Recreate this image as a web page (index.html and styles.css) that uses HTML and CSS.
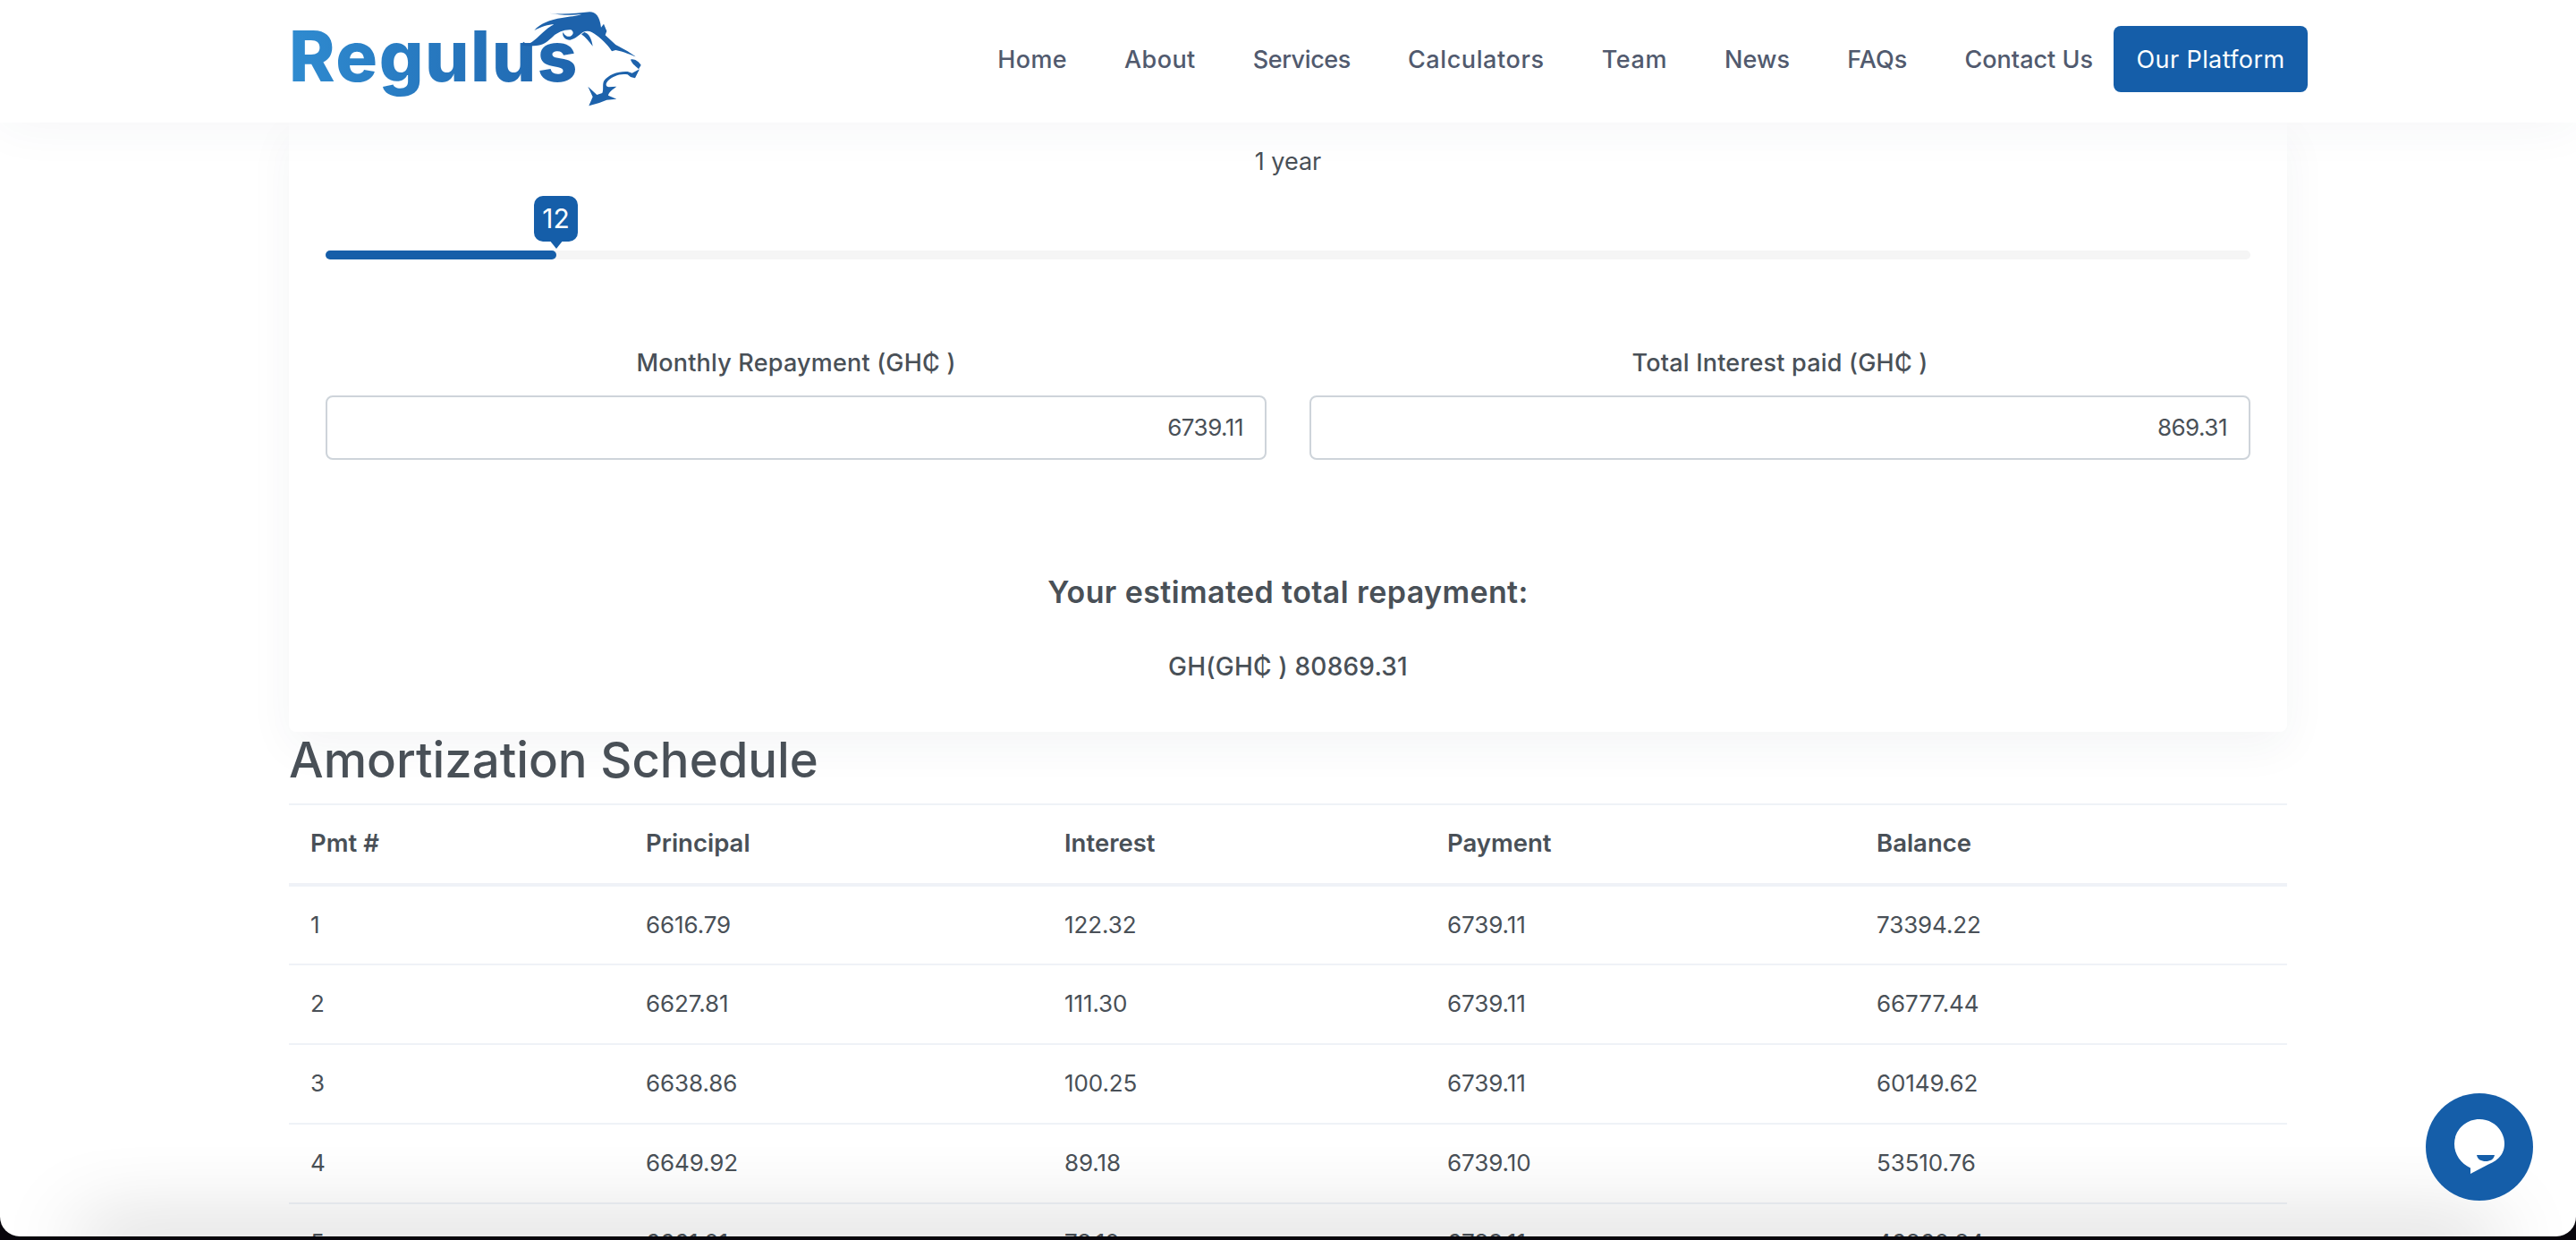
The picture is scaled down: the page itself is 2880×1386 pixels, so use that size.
FILE: index.html
```html
<!DOCTYPE html>
<html lang="en">
<head>
<meta charset="utf-8">
<title>Regulus</title>
<link rel="stylesheet" href="styles.css">
</head>
<body>
<div class="window">
  <header class="topbar">
    <div class="topbar-inner">
      <a class="logo" href="#">
        <span class="logo-text">Regulus</span>
        <svg class="lion" viewBox="0 0 510 390" aria-hidden="true">
          <path fill="#1d62ab" d="M162 44 C205 50 255 45 298 40 C318 40 332 55 336 92 L345 80 L355 104 L350 118 L385 150 L425 172 L452 190 C440 186 410 172 385 168 L372 172 C365 160 345 135 320 118 C305 105 290 100 275 108 C262 118 250 130 232 134 C215 134 205 122 208 108 C212 115 220 125 232 122 C245 118 245 105 235 100 C215 98 190 108 175 122 C160 135 145 150 125 152 C105 155 90 155 72 152 C70 148 72 142 78 140 C80 148 92 148 105 140 C125 128 150 95 178 82 C160 82 135 90 112 102 C130 80 165 66 205 60 C230 55 255 55 270 48 C235 52 195 50 162 44 Z"/>
          <path fill="#1d62ab" d="M280 108 C295 112 305 130 308 155 C295 140 285 125 270 115 Z"/>
          <path fill="#1d62ab" d="M435 200 C445 195 462 205 470 218 L462 232 C455 222 442 218 435 200 Z"/>
          <path fill="#1d62ab" d="M465 232 L450 262 L435 258 L425 250 C400 245 375 255 358 272 C350 282 352 290 362 292 L388 290 C375 300 362 308 360 320 L388 332 L355 335 L330 345 L295 355 L308 325 L292 290 L322 318 L340 312 C345 300 340 285 345 272 C360 250 395 238 425 240 L440 245 Z"/>
        </svg>
      </a>
      <nav class="nav">
        <a class="nav-link" href="#">Home</a>
        <a class="nav-link" href="#">About</a>
        <a class="nav-link nav-tight" href="#">Services</a>
        <a class="nav-link nav-wide" href="#">Calculators</a>
        <a class="nav-link nav-wide" href="#">Team</a>
        <a class="nav-link nav-snug" href="#">News</a>
        <a class="nav-link nav-snug" href="#">FAQs</a>
        <a class="nav-link nav-contact" href="#">Contact Us</a>
        <a class="platform" href="#">Our Platform</a>
      </nav>
    </div>
  </header>

  <main class="page">
    <section class="card">
      <p class="term">1 year</p>
      <div class="slider">
        <div class="slider-fill"></div>
        <div class="slider-tip">12</div>
      </div>
      <div class="fields">
        <div class="field">
          <label class="field-label">Monthly Repayment (GH₵ )</label>
          <div class="field-box">6739.11</div>
        </div>
        <div class="field">
          <label class="field-label">Total Interest paid (GH₵ )</label>
          <div class="field-box">869.31</div>
        </div>
      </div>
      <h3 class="total-title">Your estimated total repayment:</h3>
      <p class="total-value">GH(GH₵ ) 80869.31</p>
    </section>

    <h2 class="schedule-title">Amortization Schedule</h2>
    <table class="schedule">
      <colgroup>
        <col class="c1"><col class="c2"><col class="c3"><col class="c4"><col class="c5">
      </colgroup>
      <thead>
        <tr><th>Pmt #</th><th>Principal</th><th>Interest</th><th>Payment</th><th>Balance</th></tr>
      </thead>
      <tbody>
        <tr><td>1</td><td>6616.79</td><td>122.32</td><td>6739.11</td><td>73394.22</td></tr>
        <tr><td>2</td><td>6627.81</td><td>111.30</td><td>6739.11</td><td>66777.44</td></tr>
        <tr><td>3</td><td>6638.86</td><td>100.25</td><td>6739.11</td><td>60149.62</td></tr>
        <tr><td>4</td><td>6649.92</td><td>89.18</td><td>6739.10</td><td>53510.76</td></tr>
        <tr><td>5</td><td>6661.01</td><td>78.10</td><td>6739.11</td><td>46860.84</td></tr>
      </tbody>
    </table>
  </main>

  <button class="chat" aria-label="Chat">
    <svg viewBox="0 0 56 62" class="chat-icon" aria-hidden="true">
      <path fill="#fff" d="M28 0 C43.5 0 56 12.3 56 27.5 C56 39 49 46 38 50.5 L18 61 L18 54.5 C7 49 0 39.5 0 27.5 C0 12.3 12.5 0 28 0 Z"/>
      <path fill="#155ea9" d="M25 40 H45 C44 45 40 47 35 47 C30 47 26 45 25 40 Z"/>
    </svg>
  </button>
  <div class="bottom-shade"></div>
</div>
</body>
</html>
```
FILE: styles.css
```css
* { box-sizing: border-box; }
html, body { margin: 0; height: 100%; background: #08060c; overflow: hidden; }
body { font-family: "Inter", "Noto Sans", "DejaVu Sans", sans-serif; color: #495057; }
.window {
  position: relative;
  height: 1382px;
  background: #fff;
  border-radius: 0 0 22px 22px;
  overflow: hidden;
}
.topbar { position: relative; z-index: 2; height: 137px; background: #fff; box-shadow: 0 0 60px rgba(50, 60, 100, .06); }
.topbar-inner {
  width: 2234px;
  margin: 0 auto;
  height: 100%;
  display: flex;
  align-items: center;
  justify-content: space-between;
}
.logo { position: relative; display: block; width: 410px; height: 137px; text-decoration: none; }
.logo-text {
  position: absolute;
  left: 0;
  top: 17px;
  font-weight: 800;
  font-size: 78px;
  letter-spacing: 1.5px;
  line-height: 92px;
  background: linear-gradient(90deg, #2f8bd0, #1f65ae);
  -webkit-background-clip: text;
  background-clip: text;
  color: transparent;
}
.lion { position: absolute; left: 237px; top: 0; width: 170px; height: 130px; overflow: visible; }
.nav { display: flex; align-items: center; margin: 0 -23px 5px 0; font-size: 27px; font-weight: 500; letter-spacing: .4px; }
.nav-link { color: #515a6e; text-decoration: none; margin-right: 64px; white-space: nowrap; }
.nav-tight { letter-spacing: -.4px; }
.nav-wide { letter-spacing: .6px; }
.nav-snug { letter-spacing: .1px; }
.nav-contact { margin-right: 23px; letter-spacing: 0; }
.platform {
  display: flex;
  align-items: center;
  justify-content: center;
  width: 217px;
  height: 74px;
  border-radius: 8px;
  background: #155ea9;
  color: #fff;
  font-weight: 400;
  text-decoration: none;
  white-space: nowrap;
}
.page { width: 2234px; margin: 0 auto; }
.card {
  background: #fff;
  height: 681px;
  padding: 26px 41px 0;
  border-radius: 0 0 8px 8px;
  box-shadow: 0 16px 50px rgba(40, 50, 80, .05);
  text-align: center;
}
.term { margin: 0; font-size: 27px; line-height: 36px; }
.slider { position: relative; height: 10px; margin-top: 81px; background: #f5f5f5; border-radius: 5px; }
.slider-fill { width: 258px; height: 10px; background: #155ea9; border-radius: 5px; }
.slider-tip {
  position: absolute;
  left: 233px;
  bottom: 20px;
  width: 49px;
  height: 51px;
  border-radius: 10px;
  background: #155ea9;
  color: #fff;
  font-size: 30px;
  line-height: 51px;
}
.slider-tip::after {
  content: "";
  position: absolute;
  left: 17px;
  top: 49px;
  border: 8px solid transparent;
  border-top: 10px solid #155ea9;
  border-bottom: 0;
}
.fields { display: grid; grid-template-columns: 1052px 1052px; column-gap: 48px; margin-top: 98px; }
.field-label { display: block; font-size: 27px; line-height: 36px; font-weight: 500; letter-spacing: .2px; }
.field-box {
  margin-top: 18px;
  height: 72px;
  border: 2px solid #ced4da;
  border-radius: 8px;
  background: #fff;
  padding: 0 24px;
  text-align: right;
  font-size: 26px;
  letter-spacing: -.5px;
  line-height: 68px;
}
.total-title { margin: 0; padding-top: 126px; font-size: 34px; letter-spacing: .4px; line-height: 44px; font-weight: 600; }
.total-value { margin: 0; padding-top: 41px; font-size: 28px; letter-spacing: .2px; line-height: 40px; font-weight: 500; }
.schedule-title { margin: 0; height: 80px; font-size: 54.5px; line-height: 62px; font-weight: 500; }
.schedule { width: 100%; table-layout: fixed; border-collapse: collapse; font-size: 26px; }
.c1 { width: 375px; } .c2 { width: 468px; } .c3 { width: 428px; } .c4 { width: 480px; }
.schedule th, .schedule td { padding: 0 0 2px 24px; text-align: left; height: 89px; }
.schedule th { padding-bottom: 4px; font-size: 27.5px; font-weight: 600; height: 90px; border-top: 2px solid #eff2f7; border-bottom: 4px solid #eff2f7; }
.schedule td { border-bottom: 2px solid #eff2f7; font-weight: 400; letter-spacing: -.1px; }
.chat {
  position: absolute;
  z-index: 3;
  left: 2712px;
  top: 1222px;
  width: 120px;
  height: 120px;
  padding: 0;
  border: 0;
  border-radius: 50%;
  background: #155ea9;
  display: flex;
  align-items: center;
  justify-content: center;
}
.chat-icon { width: 56px; height: 62px; }
.bottom-shade {
  position: absolute;
  z-index: 2;
  left: 90px;
  right: 90px;
  bottom: -30px;
  height: 30px;
  box-shadow: 0 -6px 90px rgba(0, 0, 0, .3);
  pointer-events: none;
}
```
